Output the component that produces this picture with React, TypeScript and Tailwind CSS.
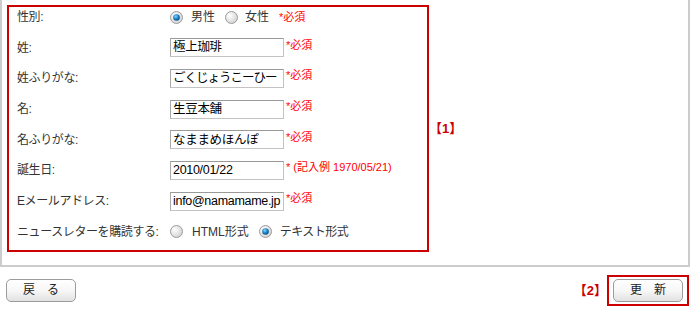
const font = { fontFamily: '"Liberation Sans", "Noto Sans CJK JP", sans-serif' };

function Radio({ checked }: { checked?: boolean }) {
  return (
    <svg width="13" height="13" viewBox="0 0 13 13" className="shrink-0">
      <defs>
        <radialGradient id="ring" cx="35%" cy="35%" r="70%">
          <stop offset="0%" stopColor="#ffffff" />
          <stop offset="100%" stopColor="#d2d2d2" />
        </radialGradient>
        <radialGradient id="dot" cx="40%" cy="35%" r="65%">
          <stop offset="0%" stopColor="#8fd6ff" />
          <stop offset="55%" stopColor="#1c86c8" />
          <stop offset="100%" stopColor="#0b4f86" />
        </radialGradient>
      </defs>
      <circle cx="6.5" cy="6.5" r="6" fill="url(#ring)" stroke="#9c9c9c" strokeWidth="1" />
      {checked && <circle cx="6.5" cy="6.5" r="3.3" fill="url(#dot)" />}
    </svg>
  );
}

function Required({ children = '*必須' }: { children?: string }) {
  return (
    <span className="ml-[2px] self-start whitespace-nowrap pt-[1px] text-[11px] leading-[12px] text-[#ff0000]">
      {children}
    </span>
  );
}

function TextField({ value, tight }: { value: string; tight?: boolean }) {
  return (
    <div
      className={
        tight
          ? 'flex h-[19px] w-[114px] shrink-0 items-center overflow-hidden whitespace-nowrap border border-[#c3c3c3] border-t-[#9a9a9a] border-l-[#aaaaaa] bg-white px-[2px] text-[12.5px] leading-none tracking-[-1px] text-black'
          : 'flex h-[19px] w-[114px] shrink-0 items-center overflow-hidden whitespace-nowrap border border-[#c3c3c3] border-t-[#9a9a9a] border-l-[#aaaaaa] bg-white px-[2px] text-[12.5px] leading-none tracking-[-0.3px] text-black'
      }
    >
      {value}
    </div>
  );
}

function Row({ label, children }: { label: string; children: React.ReactNode }) {
  return (
    <div className="flex h-[20px] items-center">
      <div className="w-[153px] shrink-0 text-[12px] leading-none tracking-[-0.4px] text-[#333]">{label}</div>
      <div className="flex h-full items-center">{children}</div>
    </div>
  );
}

function Button({ label }: { label: string }) {
  return (
    <button className="flex h-[23px] w-[70px] items-center justify-center rounded-[5px] border border-[#9c9c9c] bg-gradient-to-b from-white via-[#f7f7f7] to-[#e2e2e2] text-[12px] leading-none text-[#222]">
      {label}
    </button>
  );
}

export default function App() {
  return (
    <div className="h-[309px] w-[690px] bg-white" style={font}>
      <div className="flex items-center border-x-2 border-b-2 border-[#cccccc] pt-[5px] pb-[13px] pl-[5px]">
        <div className="flex w-[422px] flex-col gap-[10.7px] border-2 border-[#cc0000] pl-[8px] pb-[8px]">
          <Row label="性別:">
            <Radio checked />
            <span className="ml-[8px] text-[12px] text-[#333]">男性</span>
            <span className="ml-[10px]"><Radio /></span>
            <span className="ml-[7px] text-[12px] text-[#333]">女性</span>
            <span className="-mt-[3px] ml-[8px] self-start">
              <Required />
            </span>
          </Row>
          <Row label="姓:">
            <TextField value="極上珈琲" />
            <Required />
          </Row>
          <Row label="姓ふりがな:">
            <TextField value="ごくじょうこーひー" tight />
            <Required />
          </Row>
          <Row label="名:">
            <TextField value="生豆本舗" />
            <Required />
          </Row>
          <Row label="名ふりがな:">
            <TextField value="なままめほんぽ" />
            <Required />
          </Row>
          <Row label="誕生日:">
            <TextField value="2010/01/22" />
            <Required>* (記入例 1970/05/21)</Required>
          </Row>
          <Row label="Eメールアドレス:">
            <TextField value="info@namamame.jp" />
            <Required />
          </Row>
          <Row label="ニュースレターを購読する:">
            <Radio />
            <span className="ml-[9px] text-[12px] text-[#333]">HTML形式</span>
            <span className="ml-[10px]"><Radio checked /></span>
            <span className="ml-[8px] text-[12px] tracking-[-0.5px] text-[#333]">テキスト形式</span>
          </Row>
        </div>
        <span className="text-[13px] font-bold text-[#cc0000]">【1】</span>
      </div>

      <div className="mt-[8px] flex items-center justify-between pl-[6px] pr-[1px]">
        <Button label="戻　る" />
        <div className="flex items-center">
          <span className="text-[13px] font-bold text-[#cc0000]">【2】</span>
          <div className="border-2 border-[#cc0000] p-[2px] px-[4px]">
            <Button label="更　新" />
          </div>
        </div>
      </div>
    </div>
  );
}
